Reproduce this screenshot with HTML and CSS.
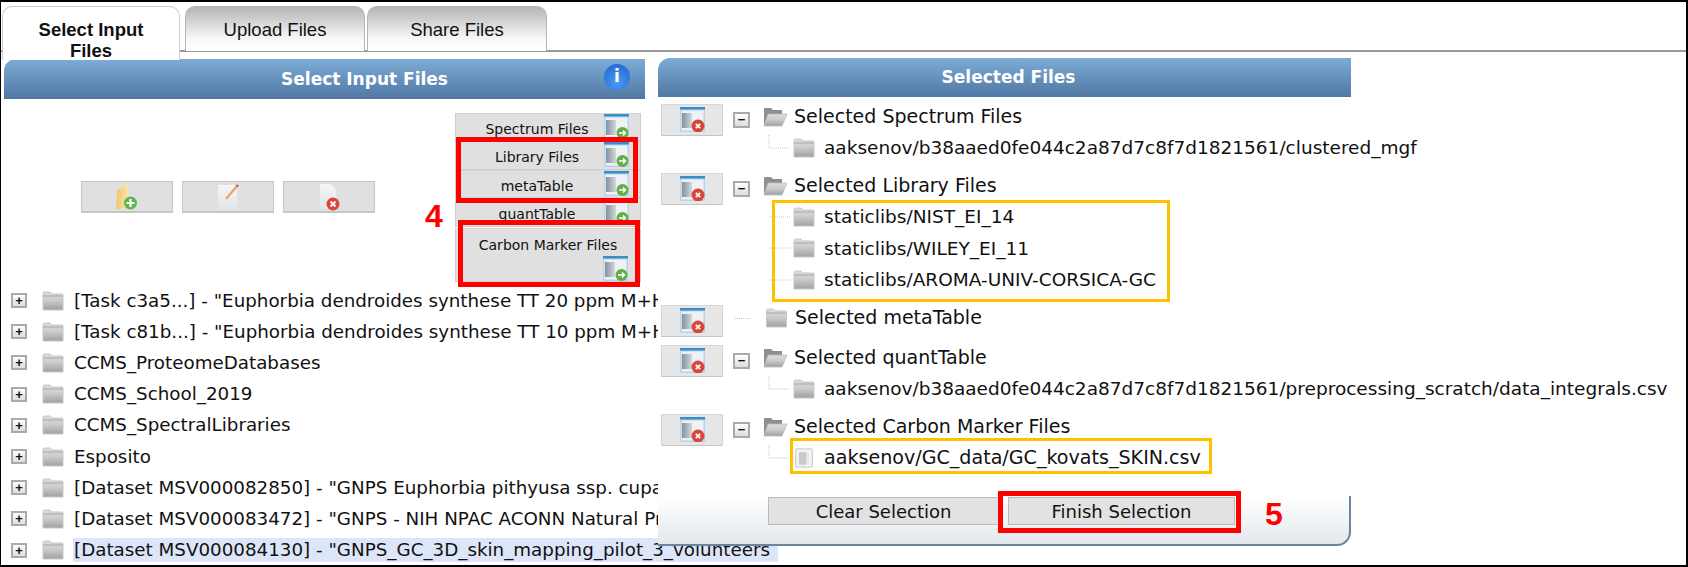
FILE: index.html
```html
<!DOCTYPE html>
<html lang="en">
<head>
  <meta charset="UTF-8">
  <title>Select Input Files</title>
  <link rel="stylesheet" href="styles.css">
</head>
<body>
  <svg class="icon-defs" width="0" height="0">
    <defs>
      <linearGradient id="gray-fold" x1="0" y1="0" x2="0" y2="1">
        <stop offset="0" stop-color="#dcdcdc"/>
        <stop offset="0.45" stop-color="#cdcdcd"/>
        <stop offset="1" stop-color="#a0a0a0"/>
      </linearGradient>
      <linearGradient id="win-block" x1="0" y1="0" x2="1" y2="0">
        <stop offset="0" stop-color="#84919c"/>
        <stop offset="1" stop-color="#d4d8dc"/>
      </linearGradient>
      <linearGradient id="yellow-fold" x1="0" y1="0" x2="1" y2="0">
        <stop offset="0" stop-color="#ecc86a"/>
        <stop offset="1" stop-color="#f8e7b0"/>
      </linearGradient>
      <linearGradient id="sheet" x1="0" y1="0" x2="0" y2="1">
        <stop offset="0" stop-color="#f6f6f6"/>
        <stop offset="1" stop-color="#dfe5e8"/>
      </linearGradient>
      <symbol id="folder" viewBox="0 0 22 20">
        <path d="M1 4 L1 2.5 Q1 1 2.5 1 L8 1 L10 3 L20 3 Q21 3 21 4 L21 19 L1 19 Z" fill="url(#gray-fold)" stroke="#c8c8c8" stroke-width="1"/>
        <path d="M1 5 L21 5" stroke="#a8a8a8" stroke-width="1"/>
      </symbol>
      <symbol id="folder-open" viewBox="0 0 25 20">
        <path d="M1 2 Q1 1 2 1 L8 1 L10 3 L19 3 L19 7 L6 7 L2 19 L1 19 Z" fill="#8e8e8e"/>
        <path d="M5 7 L24 7 L19 19 L1 19 Z" fill="url(#gray-fold)" stroke="#bdbdbd" stroke-width="0.8"/>
      </symbol>
      <symbol id="win" viewBox="0 0 25 25">
        <rect x="0" y="0" width="25" height="25" fill="#b4d3ec"/>
        <rect x="0" y="0" width="25" height="2.5" fill="#3d8cc8"/>
        <rect x="1.5" y="3.5" width="22" height="20" fill="#eef2f5"/>
        <rect x="2" y="6" width="10" height="15" fill="url(#win-block)"/>
      </symbol>
      <symbol id="file" viewBox="0 0 22 24">
        <rect x="1" y="1" width="20" height="22" rx="2" fill="#f4f4f4" stroke="#cfcfcf" stroke-width="1.5"/>
        <rect x="5" y="5" width="9" height="15" fill="#c9c9c9"/>
        <path d="M14 6h3M14 9h3M14 12h3M14 15h3M14 18h3" stroke="#dedede" stroke-width="1.5"/>
      </symbol>
    </defs>
  </svg>

  <div class="frame">
    <div class="tabs">
      <div class="tab tab-active">Select Input<br>Files</div>
      <div class="tab">Upload Files</div>
      <div class="tab">Share Files</div>
    </div>

    <div class="panels">
      <div class="left">
        <div class="bar bar-left">
          Select Input Files
          <span class="info">i</span>
        </div>

        <div class="tools">
          <div class="actions">
            <button class="action">
              <svg width="26" height="30" viewBox="0 0 26 30">
                <path d="M3 8 L14 2 L15 24 L2 28 Z" fill="url(#yellow-fold)"/>
                <circle cx="16.5" cy="21" r="6.5" fill="#5fb548"/>
                <path d="M16.5 17v8M12.5 21h8" stroke="#fff" stroke-width="2.2"/>
              </svg>
            </button>
            <button class="action">
              <svg width="26" height="30" viewBox="0 0 26 30">
                <rect x="3" y="3" width="19" height="25" fill="url(#sheet)"/>
                <path d="M11 17 L22 4" stroke="#e9a76b" stroke-width="2.4"/>
                <path d="M21.5 4.5 L23 3" stroke="#c8504a" stroke-width="2.4"/>
              </svg>
            </button>
            <button class="action">
              <svg width="26" height="30" viewBox="0 0 26 30">
                <path d="M4 2 L15 2 L20 7 L20 27 L4 27 Z" fill="url(#sheet)"/>
                <circle cx="17" cy="22" r="6.5" fill="#d9453a"/>
                <path d="M14.5 19.5l5 5M19.5 19.5l-5 5" stroke="#fff" stroke-width="2"/>
              </svg>
            </button>
          </div>

          <div class="types">
            <div class="type">
              <span class="type-label">Spectrum Files</span>
              <svg class="win-icon"><use href="#win"/><circle cx="18.5" cy="19" r="6" fill="#62ad45"/><path d="M15 19h6M19 16.5l2.5 2.5-2.5 2.5" stroke="#fff" stroke-width="1.5" fill="none"/></svg>
            </div>
            <div class="type">
              <span class="type-label">Library Files</span>
              <svg class="win-icon"><use href="#win"/><circle cx="18.5" cy="19" r="6" fill="#62ad45"/><path d="M15 19h6M19 16.5l2.5 2.5-2.5 2.5" stroke="#fff" stroke-width="1.5" fill="none"/></svg>
            </div>
            <div class="type">
              <span class="type-label">metaTable</span>
              <svg class="win-icon"><use href="#win"/><circle cx="18.5" cy="19" r="6" fill="#62ad45"/><path d="M15 19h6M19 16.5l2.5 2.5-2.5 2.5" stroke="#fff" stroke-width="1.5" fill="none"/></svg>
            </div>
            <div class="type">
              <span class="type-label">quantTable</span>
              <svg class="win-icon"><use href="#win"/><circle cx="18.5" cy="19" r="6" fill="#62ad45"/><path d="M15 19h6M19 16.5l2.5 2.5-2.5 2.5" stroke="#fff" stroke-width="1.5" fill="none"/></svg>
            </div>
            <div class="type type-tall">
              <span class="type-label">Carbon Marker Files</span>
              <svg class="win-icon"><use href="#win"/><circle cx="18.5" cy="19" r="6" fill="#62ad45"/><path d="M15 19h6M19 16.5l2.5 2.5-2.5 2.5" stroke="#fff" stroke-width="1.5" fill="none"/></svg>
            </div>
          </div>
        </div>

        <ul class="tree">
          <li class="node"><span class="expand">+</span><svg class="folder"><use href="#folder"/></svg><span class="name">[Task c3a5...] - "Euphorbia dendroides synthese TT 20 ppm M+H"</span></li>
          <li class="node"><span class="expand">+</span><svg class="folder"><use href="#folder"/></svg><span class="name">[Task c81b...] - "Euphorbia dendroides synthese TT 10 ppm M+H"</span></li>
          <li class="node"><span class="expand">+</span><svg class="folder"><use href="#folder"/></svg><span class="name">CCMS_ProteomeDatabases</span></li>
          <li class="node"><span class="expand">+</span><svg class="folder"><use href="#folder"/></svg><span class="name">CCMS_School_2019</span></li>
          <li class="node"><span class="expand">+</span><svg class="folder"><use href="#folder"/></svg><span class="name">CCMS_SpectralLibraries</span></li>
          <li class="node"><span class="expand">+</span><svg class="folder"><use href="#folder"/></svg><span class="name">Esposito</span></li>
          <li class="node"><span class="expand">+</span><svg class="folder"><use href="#folder"/></svg><span class="name">[Dataset MSV000082850] - "GNPS Euphorbia pithyusa ssp. cupanii"</span></li>
          <li class="node"><span class="expand">+</span><svg class="folder"><use href="#folder"/></svg><span class="name">[Dataset MSV000083472] - "GNPS - NIH NPAC ACONN Natural Products"</span></li>
          <li class="node"><span class="expand">+</span><svg class="folder"><use href="#folder"/></svg><span class="name name-selected">[Dataset MSV000084130] - "GNPS_GC_3D_skin_mapping_pilot_3_volunteers</span></li>
        </ul>
      </div>

      <div class="right">
        <div class="bar bar-right">Selected Files</div>

        <div class="group">
          <div class="group-head">
            <button class="remove"><svg class="win-icon"><use href="#win"/><circle cx="18" cy="19" r="6.5" fill="#d9453a"/><path d="M15.8 16.8l4.4 4.4M20.2 16.8l-4.4 4.4" stroke="#fff" stroke-width="1.7"/></svg></button>
            <span class="collapse">−</span>
            <svg class="folder-open"><use href="#folder-open"/></svg>
            <span class="group-name">Selected Spectrum Files</span>
          </div>
          <ul class="children">
            <li class="child"><svg class="elbow"><path d="M1 0V13H22" stroke="#c6c6c6" stroke-dasharray="1 1" fill="none"/></svg><svg class="folder"><use href="#folder"/></svg><span>aaksenov/b38aaed0fe044c2a87d7c8f7d1821561/clustered_mgf</span></li>
          </ul>
        </div>

        <div class="group">
          <div class="group-head">
            <button class="remove"><svg class="win-icon"><use href="#win"/><circle cx="18" cy="19" r="6.5" fill="#d9453a"/><path d="M15.8 16.8l4.4 4.4M20.2 16.8l-4.4 4.4" stroke="#fff" stroke-width="1.7"/></svg></button>
            <span class="collapse">−</span>
            <svg class="folder-open"><use href="#folder-open"/></svg>
            <span class="group-name">Selected Library Files</span>
          </div>
          <ul class="children">
            <li class="child"><svg class="elbow"><path d="M1 13H22" stroke="#c6c6c6" stroke-dasharray="1 1" fill="none"/></svg><svg class="folder"><use href="#folder"/></svg><span>staticlibs/NIST_EI_14</span></li>
            <li class="child"><svg class="elbow"><path d="M1 13H22" stroke="#c6c6c6" stroke-dasharray="1 1" fill="none"/></svg><svg class="folder"><use href="#folder"/></svg><span>staticlibs/WILEY_EI_11</span></li>
            <li class="child"><svg class="elbow"><path d="M1 13H22" stroke="#c6c6c6" stroke-dasharray="1 1" fill="none"/></svg><svg class="folder"><use href="#folder"/></svg><span>staticlibs/AROMA-UNIV-CORSICA-GC</span></li>
          </ul>
        </div>

        <div class="group group-empty">
          <div class="group-head">
            <button class="remove"><svg class="win-icon"><use href="#win"/><circle cx="18" cy="19" r="6.5" fill="#d9453a"/><path d="M15.8 16.8l4.4 4.4M20.2 16.8l-4.4 4.4" stroke="#fff" stroke-width="1.7"/></svg></button>
            <span class="leaf-dots"></span>
            <svg class="folder-open"><use href="#folder"/></svg>
            <span class="group-name">Selected metaTable</span>
          </div>
        </div>

        <div class="group">
          <div class="group-head">
            <button class="remove"><svg class="win-icon"><use href="#win"/><circle cx="18" cy="19" r="6.5" fill="#d9453a"/><path d="M15.8 16.8l4.4 4.4M20.2 16.8l-4.4 4.4" stroke="#fff" stroke-width="1.7"/></svg></button>
            <span class="collapse">−</span>
            <svg class="folder-open"><use href="#folder-open"/></svg>
            <span class="group-name">Selected quantTable</span>
          </div>
          <ul class="children">
            <li class="child"><svg class="elbow"><path d="M1 0V13H22" stroke="#c6c6c6" stroke-dasharray="1 1" fill="none"/></svg><svg class="folder"><use href="#folder"/></svg><span>aaksenov/b38aaed0fe044c2a87d7c8f7d1821561/preprocessing_scratch/data_integrals.csv</span></li>
          </ul>
        </div>

        <div class="group">
          <div class="group-head">
            <button class="remove"><svg class="win-icon"><use href="#win"/><circle cx="18" cy="19" r="6.5" fill="#d9453a"/><path d="M15.8 16.8l4.4 4.4M20.2 16.8l-4.4 4.4" stroke="#fff" stroke-width="1.7"/></svg></button>
            <span class="collapse">−</span>
            <svg class="folder-open"><use href="#folder-open"/></svg>
            <span class="group-name">Selected Carbon Marker Files</span>
          </div>
          <ul class="children">
            <li class="child child-file"><svg class="elbow"><path d="M1 0V13H22" stroke="#c6c6c6" stroke-dasharray="1 1" fill="none"/></svg><svg class="folder"><use href="#file"/></svg><span>aaksenov/GC_data/GC_kovats_SKIN.csv</span></li>
          </ul>
        </div>

        <div class="foot">
          <button class="foot-btn foot-clear">Clear Selection</button>
          <button class="foot-btn foot-finish">Finish Selection</button>
        </div>
      </div>
    </div>

    <!-- annotations drawn over the screenshot -->
    <div class="marks">
      <div class="mark red mark-types"></div>
      <div class="mark red mark-carbon"></div>
      <div class="mark red mark-finish"></div>
      <div class="mark orange mark-libs"></div>
      <div class="mark orange mark-csv"></div>
      <span class="step step-4">4</span>
      <span class="step step-5">5</span>
    </div>
  </div>
</body>
</html>
```

FILE: styles.css
```css
* {
  box-sizing: border-box;
}
body {
  margin: 0;
  background: #fff;
  font-family: "DejaVu Sans", sans-serif;
  color: #111;
}
ul {
  list-style: none;
  margin: 0;
  padding: 0;
}
button {
  font-family: inherit;
  padding: 0;
}
.icon-defs {
  position: absolute;
}
.frame {
  position: relative;
  width: 1688px;
  height: 567px;
  border: solid #000;
  border-width: 2px 2px 2px 1px;
  overflow: hidden;
}

/* tabs */
.tabs {
  display: flex;
  gap: 2px;
  height: 50px;
  padding: 4px 0 0 1px;
  border-bottom: 2px solid #999;
}
.tab {
  width: 180px;
  height: 45px;
  padding-top: 12px;
  border: 1px solid #b5b5b5;
  border-bottom: none;
  border-radius: 10px 10px 0 0;
  background: linear-gradient(#b4b4b4, #f6f6f6 70%, #fff);
  font-family: "Liberation Sans", sans-serif;
  font-size: 18.5px;
  text-align: center;
}
.tab-active {
  position: relative;
  z-index: 1;
  width: 178px;
  height: 54px;
  margin-right: 3px;
  padding-top: 12px;
  background: #fff;
  border-color: #ccc;
  font-weight: bold;
  line-height: 21px;
}

/* panels */
.panels {
  display: flex;
  padding: 7px 0 0 3px;
}
.left {
  flex: none;
  width: 641px;
}
.bar {
  position: relative;
  height: 40px;
  border-radius: 12px 0 0 0;
  background: linear-gradient(#7eabd7, #4f78a3);
  color: #fff;
  font-size: 17px;
  font-weight: bold;
  line-height: 40px;
  text-align: center;
}
.bar-left {
  padding-left: 80px;
}
.info {
  position: absolute;
  top: 5px;
  right: 15px;
  width: 26px;
  height: 26px;
  border-radius: 50%;
  background: radial-gradient(circle at 50% 70%, #4a9cf0, #1c5fd0);
  font-size: 17px;
  line-height: 25px;
}

/* toolbar */
.tools {
  display: flex;
  height: 182px;
  padding-top: 14px;
}
.actions {
  display: flex;
  gap: 9px;
  margin: 68px 0 0 77px;
}
.action {
  display: flex;
  align-items: center;
  justify-content: center;
  width: 92px;
  height: 32px;
  border: 1px solid #c6c6c6;
  border-bottom-width: 2px;
  background: #e0e0e0;
}
.types {
  width: 186px;
  margin-left: 80px;
}
.type {
  display: flex;
  height: 28.4px;
  background: #e0e0e0;
  border: 1px solid #cfcfcf;
  border-top-color: #d4d4d4;
  font-size: 14px;
  line-height: 31px;
}
.type-label {
  width: 148px;
  padding-left: 14px;
  text-align: center;
  white-space: nowrap;
}
.win-icon {
  flex: none;
  width: 25px;
  height: 25px;
}
.type-tall {
  display: block;
  height: 54px;
  margin-top: 1px;
  padding-top: 2px;
  line-height: 28px;
}
.type-tall .type-label {
  display: block;
  width: auto;
  padding: 0;
}
.type-tall .win-icon {
  display: block;
  margin: -3px 0 0 147px;
}

/* file tree */
.tree {
  margin-top: 4px;
  white-space: nowrap;
  font-size: 18.3px;
}
.node {
  display: flex;
  align-items: center;
  height: 31.2px;
}
.expand {
  flex: none;
  width: 16px;
  height: 15px;
  margin: 0 15px 0 7px;
  border: 2px solid #aaa;
  background: linear-gradient(#fff, #ddd);
  font-family: "Liberation Sans", sans-serif;
  font-size: 13px;
  font-weight: bold;
  line-height: 11px;
  text-align: center;
}
.folder {
  flex: none;
  width: 22px;
  height: 20px;
}
.name {
  flex: none;
  margin-left: 9px;
  padding: 0 1px;
  line-height: 24px;
}
.name-selected {
  width: 705px;
  background: #dde6f8;
}

/* selected files */
.right {
  position: relative;
  z-index: 1;
  display: flex;
  flex-direction: column;
  flex: none;
  width: 693px;
  height: 488px;
  margin: -1px 0 0 13px;
  background: #fff;
}
.bar-right {
  flex: none;
  height: 39px;
  margin-bottom: 7px;
  padding-left: 8px;
  line-height: 39px;
}
.group {
  margin-bottom: 9.5px;
  font-size: 18.5px;
  white-space: nowrap;
}
.group-head {
  display: flex;
  align-items: flex-start;
  height: 32px;
  line-height: 24px;
}
.group-name {
  font-size: 19px;
}
.group-empty {
  margin-bottom: 8px;
}
.remove {
  display: flex;
  justify-content: center;
  flex: none;
  width: 62px;
  height: 32px;
  margin: 0 10px 0 3px;
  padding-top: 2px;
  border: 1px solid #d6d6d6;
  border-bottom-color: #c6c6c6;
  background: #e6e6e6;
}
.collapse {
  flex: none;
  width: 17px;
  height: 16px;
  margin: 8px 13px 0 0;
  border: 2px solid #aaa;
  background: linear-gradient(#fff, #ddd);
  font-family: "Liberation Sans", sans-serif;
  font-size: 13px;
  font-weight: bold;
  line-height: 11px;
  text-align: center;
}
.leaf-dots {
  flex: none;
  width: 15px;
  height: 1px;
  margin: 13px 14px 0 2px;
  border-top: 1px dotted #c6c6c6;
}
.folder-open {
  flex: none;
  width: 25px;
  height: 20px;
  margin-top: 3px;
  margin-right: 6px;
}
.children {
  margin-top: -4px;
}
.child {
  display: flex;
  align-items: center;
  height: 31.5px;
  padding-left: 110px;
}
.elbow {
  flex: none;
  width: 25px;
  height: 26px;
}
.child .folder {
  margin-right: 9px;
}
.child-file {
  font-size: 19.1px;
}

/* footer buttons */
.foot {
  display: flex;
  gap: 9px;
  flex: none;
  height: 50px;
  margin-top: auto;
  padding: 1px 0 0 110px;
  border: solid #6d84a0;
  border-width: 0 2px 2px 0;
  border-radius: 0 0 14px 0;
  background: linear-gradient(#fff, #e4e8ec);
}
.foot-btn {
  height: 28px;
  border: 1px solid #bbb;
  background: #e2e2e2;
  color: #111;
  font-size: 18px;
}
.foot-clear {
  width: 231px;
}
.foot-finish {
  width: 227px;
}

/* annotations, coordinates are page coordinates */
.marks {
  position: absolute;
  top: -2px;
  left: -1px;
  z-index: 2;
}
.mark {
  position: absolute;
}
.red {
  border: 5px solid #f00;
}
.orange {
  border: 3px solid #ffc000;
}
.mark-types {
  left: 456px;
  top: 137px;
  width: 182px;
  height: 66px;
}
.mark-carbon {
  left: 458px;
  top: 220px;
  width: 182px;
  height: 67px;
}
.mark-finish {
  left: 998px;
  top: 491px;
  width: 243px;
  height: 42px;
}
.mark-libs {
  left: 772px;
  top: 200px;
  width: 398px;
  height: 102px;
}
.mark-csv {
  left: 790px;
  top: 438px;
  width: 422px;
  height: 36px;
}
.step {
  position: absolute;
  color: #f00;
  font-family: "Liberation Sans", sans-serif;
  font-size: 32px;
  font-weight: bold;
  line-height: 32px;
}
.step-4 {
  left: 425px;
  top: 200px;
}
.step-5 {
  left: 1265px;
  top: 498px;
}
```
